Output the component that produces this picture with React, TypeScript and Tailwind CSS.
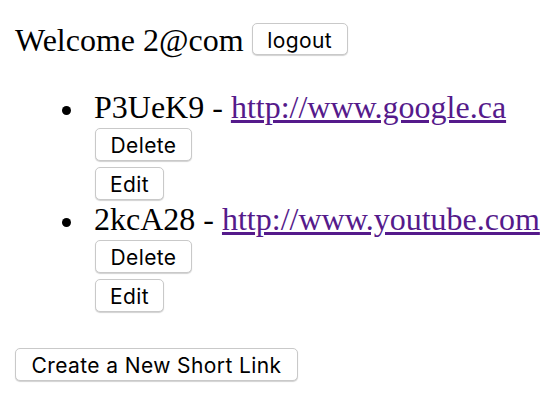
import React from "react";

type ShortLink = {
  id: string;
  url: string;
};

const links: ShortLink[] = [
  { id: "P3UeK9", url: "http://www.google.ca" },
  { id: "2kcA28", url: "http://www.youtube.com" },
];

// plain mac-style push button
function Button({ label, className }: { label: string; className: string }) {
  return (
    <button
      type="button"
      className={`block rounded-[5px] border border-[#c9c9c9] bg-white pt-[2px] text-center font-['Inter',sans-serif] text-[21px] leading-none tracking-[0.4px] text-black shadow-[0_1px_1px_rgba(0,0,0,0.18)] ${className}`}
    >
      {label}
    </button>
  );
}

export default function App() {
  return (
    <div className="min-h-[402px] bg-white pl-[15px] pt-[15px] font-['Liberation_Serif',serif] text-[32px] leading-[36px] text-black">
      {/* header */}
      <div className="flex h-[44px] items-start">
        <span className="mt-[7px] h-[36px] whitespace-nowrap">Welcome 2@com</span>
        <Button label="logout" className="ml-[8px] mt-[8px] h-[32px] w-[96px]" />
      </div>

      {/* list of short links */}
      <ul className="mt-[30px] flex flex-col pl-[47px]">
        {links.map((link, index) => (
          <li key={link.id} className={index > 0 ? "mt-[1px]" : ""}>
            <div className="flex h-[36px] items-start">
              <span className="mt-[17px] h-[9px] w-[9px] shrink-0 rounded-full bg-black" />
              <span className="ml-[23px] whitespace-pre">
                {link.id} -{" "}
                <a href="#" className="text-[#551a8b] underline">
                  {link.url}
                </a>
              </span>
            </div>
            <div className="pl-[33px]">
              <Button label="Delete" className="mt-[3px] h-[33px] w-[97px]" />
              <Button label="Edit" className="mt-[6px] h-[33px] w-[69px]" />
            </div>
          </li>
        ))}
      </ul>

      <Button label="Create a New Short Link" className="mt-[36px] h-[33px] w-[283px]" />
    </div>
  );
}
